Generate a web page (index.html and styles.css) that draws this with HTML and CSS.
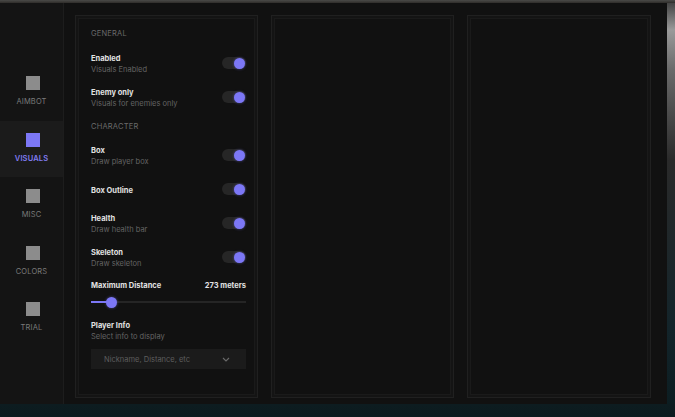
FILE: index.html
```html
<!DOCTYPE html>
<html>
<head>
<meta charset="utf-8">
<link rel="stylesheet" href="styles.css">
</head>
<body>
<div class="scene">
  <div class="app">
    <nav class="sidebar">
      <div class="nav-item"><span class="nav-icon"></span><span class="nav-label">AIMBOT</span></div>
      <div class="nav-item active"><span class="nav-icon"></span><span class="nav-label">VISUALS</span></div>
      <div class="nav-item"><span class="nav-icon"></span><span class="nav-label">MISC</span></div>
      <div class="nav-item"><span class="nav-icon"></span><span class="nav-label">COLORS</span></div>
      <div class="nav-item"><span class="nav-icon"></span><span class="nav-label">TRIAL</span></div>
    </nav>
    <main class="main">
      <section class="panel">
        <div class="section-title">GENERAL</div>
        <div class="row">
          <div class="row-text"><div class="title">Enabled</div><div class="sub">Visuals Enabled</div></div>
          <span class="toggle"><span class="knob"></span></span>
        </div>
        <div class="row">
          <div class="row-text"><div class="title">Enemy only</div><div class="sub">Visuals for enemies only</div></div>
          <span class="toggle"><span class="knob"></span></span>
        </div>
        <div class="section-title second">CHARACTER</div>
        <div class="row first-char">
          <div class="row-text"><div class="title">Box</div><div class="sub">Draw player box</div></div>
          <span class="toggle"><span class="knob"></span></span>
        </div>
        <div class="row">
          <div class="row-text"><div class="title">Box Outline</div></div>
          <span class="toggle"><span class="knob"></span></span>
        </div>
        <div class="row">
          <div class="row-text"><div class="title">Health</div><div class="sub">Draw health bar</div></div>
          <span class="toggle"><span class="knob"></span></span>
        </div>
        <div class="row">
          <div class="row-text"><div class="title">Skeleton</div><div class="sub">Draw skeleton</div></div>
          <span class="toggle"><span class="knob"></span></span>
        </div>
        <div class="slider-head">
          <span class="title">Maximum Distance</span>
          <span class="title">273 meters</span>
        </div>
        <div class="slider">
          <div class="slider-track"><div class="slider-fill" style="width:13%"></div><span class="slider-knob" style="left:13%"></span></div>
        </div>
        <div class="info">
          <div class="title">Player Info</div>
          <div class="sub">Select info to display</div>
        </div>
        <div class="dropdown">
          <span>Nickname, Distance, etc</span>
          <svg class="chev" width="8" height="5" viewBox="0 0 8 5"><path d="M1 1 L4 4 L7 1" fill="none" stroke="#6a6a6a" stroke-width="1.1"/></svg>
        </div>
      </section>
      <section class="panel"></section>
      <section class="panel"></section>
    </main>
  </div>
</div>
</body>
</html>
```

FILE: styles.css
```css
* { box-sizing: border-box; }
html, body { margin: 0; padding: 0; }
body {
  width: 675px;
  height: 417px;
  overflow: hidden;
  font-family: Inter, "Open Sans", sans-serif;
  background: linear-gradient(180deg, #3a3a3a 0px, #9a9a9a 30px, #6a6a6a 70px, #2a2a2a 160px, #13242a 330px, #0b1c20 417px);
}
.scene {
  width: 675px;
  height: 417px;
  padding-top: 3px;
  background: linear-gradient(180deg, #4a4a48 0px, #2f2d2a 3px, transparent 3px),
              linear-gradient(0deg, #0b1b1f 0px, #0d1c20 13px, transparent 13px);
}
.app {
  width: 667px;
  height: 401px;
  display: flex;
  background: #121212;
}
.sidebar {
  width: 64px;
  flex: none;
  background: #141414;
  border-right: 1px solid #1d1d1d;
  padding-top: 61px;
  display: flex;
  flex-direction: column;
}
.nav-item {
  height: 56.5px;
  display: flex;
  flex-direction: column;
  align-items: center;
  padding-top: 12px;
  gap: 7px;
}
.nav-item.active { background: #1b1b1b; }
.nav-icon {
  width: 14px;
  height: 14px;
  background: #8c8c8c;
  margin-left: 2px;
}
.nav-label {
  font-size: 7.5px;
  line-height: 10px;
  color: #7a7a7a;
  letter-spacing: 0.15px;
}
.nav-item.active .nav-icon { background: #7c77f6; }
.nav-item.active .nav-label { color: #807cf2; font-weight: 600; }
.main {
  flex: 1;
  display: flex;
  gap: 13px;
  padding: 12px 16px 6px 11px;
  background: #111111;
}
.panel {
  width: 183px;
  flex: none;
  border: 1px solid #202020;
  box-shadow: inset 0 0 0 2px #141414, inset 0 0 0 3px #1a1a1a;
  background: #111111;
  padding: 12px 10px 0 15px;
  display: flex;
  flex-direction: column;
}
.panel:last-child { width: 184px; }
.section-title {
  font-size: 7.5px;
  line-height: 12px;
  color: #6a6a6a;
  letter-spacing: 0.2px;
}
.section-title.second { margin-top: 7px; }
.row {
  height: 34px;
  display: flex;
  align-items: center;
  justify-content: space-between;
  padding-top: 2px;
}
.section-title + .row { margin-top: 6px; }
.section-title.second + .row { margin-top: 5px; }
.title {
  font-size: 7.5px;
  line-height: 11px;
  font-weight: 700;
  color: #e2e2e2;
}
.sub {
  font-size: 7.5px;
  line-height: 11px;
  color: #646464;
}
.toggle {
  position: relative;
  width: 24px;
  height: 12px;
  border-radius: 6px;
  background: #262626;
  margin-right: 1px;
  margin-top: -2px;
}
.knob {
  position: absolute;
  right: 1px;
  top: 0.5px;
  width: 11px;
  height: 11px;
  border-radius: 50%;
  background: #7c77f6;
  box-shadow: 0 0 3px rgba(124,119,246,0.5);
}
.slider-head {
  margin-top: 6px;
  display: flex;
  justify-content: space-between;
  padding-right: 1px;
}
.slider {
  height: 18px;
  display: flex;
  align-items: center;
  margin-top: 2px;
}
.slider-track {
  position: relative;
  flex: 1;
  height: 2px;
  background: #252525;
  margin-right: 1px;
}
.slider-fill {
  height: 2px;
  background: #7c77f6;
}
.slider-knob {
  position: absolute;
  top: -4.5px;
  width: 11px;
  height: 11px;
  margin-left: -5px;
  border-radius: 50%;
  background: #7c77f6;
  box-shadow: 0 0 3px rgba(124,119,246,0.5);
}
.info { margin-top: 9px; }
.dropdown {
  margin-top: 7px;
  height: 20px;
  margin-right: 1px;
  background: #1b1b1b;
  display: flex;
  align-items: center;
  justify-content: space-between;
  padding: 0 16px 0 13px;
  font-size: 7.5px;
  color: #5e5e5e;
}
.chev { margin-top: 1px; }
```
